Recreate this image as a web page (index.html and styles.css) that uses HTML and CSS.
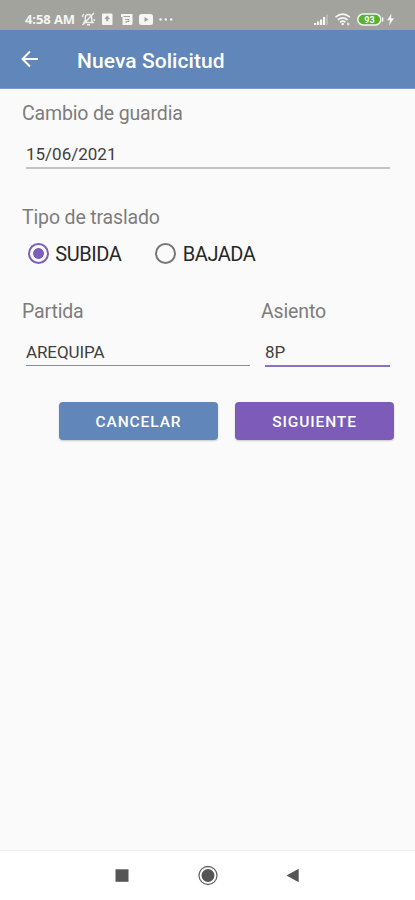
FILE: index.html
```html
<!DOCTYPE html>
<html lang="es">
<head>
<meta charset="utf-8">
<title>Nueva Solicitud</title>
<link rel="stylesheet" href="styles.css">
</head>
<body>
<div class="status">
  <span class="clock">4:58 AM</span>
  <svg class="notices" width="94" height="16" viewBox="0 0 94 16">
    <g fill="none" stroke="#f0f0ee" stroke-width="1.4">
      <path d="M3 11.5h9l-1.3-2V6.5Q10.500 3.500 7.500 3.500Q4.500 3.500 4.300 6.500V9.500ZM6 13.800h3M1.500 14 13 2M1.500 6Q1.500 4 3 3M13.300 8v2"/>
    </g>
    <rect x="21" y="2.500" width="10.500" height="11.500" rx="1" fill="#f5f5f3"/>
    <path d="M26.200 4.500 29 8h-1.800v2.200h-2V8h-1.800Z" fill="#a3a39e"/>
    <path d="M40 3h11.500v9.500q0 1.500-1.500 1.500h-8.500V6H40Z" fill="#f5f5f3"/>
    <path d="M42.500 5.500h6.500M44 8.500h4v2h-3v1.500" fill="none" stroke="#a3a39e"/>
    <rect x="58" y="3" width="14" height="11" rx="2.500" fill="#f5f5f3"/>
    <path d="m63.500 6 4 2.500-4 2.500Z" fill="#a3a39e"/>
    <g fill="#f5f5f3"><circle cx="79.500" cy="8.500" r="1.200"/><circle cx="84.800" cy="8.500" r="1.200"/><circle cx="90.200" cy="8.500" r="1.200"/></g>
  </svg>
  <svg class="signals" width="84" height="16" viewBox="0 0 84 16">
    <g fill="#f5f5f3"><path d="M1 12h2.200v2H1ZM4 10.500h2.200V14H4ZM7 8.500h2.200V14H7ZM10 6h2.200v8H10Z"/><path d="M13.400 3.500h1.300V14h-1.300Z" opacity=".4"/></g>
    <g fill="none" stroke="#f5f5f3" stroke-width="1.700"><path d="M22.500 6.200q7.200-6 14.400 0M24.800 8.800q4.900-4 9.800 0M27 11.200q2.700-2 5.400 0"/></g>
    <circle cx="29.700" cy="13" r="1.300" fill="#f5f5f3"/><path d="M35 11.500v3M34 13h2.500" stroke="#f5f5f3"/>
    <rect x="44.800" y="3" width="23" height="11" rx="5.500" fill="#54b42b" stroke="#f5f5f3" stroke-width="1.500"/>
    <rect x="69" y="6.500" width="1.300" height="4" fill="#f5f5f3"/>
    <text class="charge" x="56.500" y="11.800" text-anchor="middle">93</text>
    <path d="m78.500 2.500-4.300 6.700h2.800l-1 5.300 5-7.300h-3Z" fill="#f5f5f3"/>
  </svg>
</div>
<header class="bar">
  <svg width="18" height="18" viewBox="0 0 18 18" fill="none" stroke="#fff" stroke-width="1.900"><path d="M17 9H2M9 1.500 1.500 9 9 16.500"/></svg>
  <h1><span>Nueva Solicitud</span></h1>
</header>
<main>
  <label class="caption guard"><span>Cambio de guardia</span></label>
  <div class="field date"><span>15/06/2021</span></div>
  <div class="caption kind"><span>Tipo de traslado</span></div>
  <div class="options">
    <div class="option"><i class="radio on"></i><span class="up">SUBIDA</span></div>
    <div class="option"><i class="radio"></i><span class="down">BAJADA</span></div>
  </div>
  <div class="pair">
    <div><div class="caption from"><span>Partida</span></div><div class="field city"><span>AREQUIPA</span></div></div>
    <div><div class="caption seat"><span>Asiento</span></div><div class="field active"><span>8P</span></div></div>
  </div>
  <div class="actions">
    <button class="cancel"><span>CANCELAR</span></button>
    <button class="next"><span>SIGUIENTE</span></button>
  </div>
</main>
<nav>
  <svg width="415" height="50" viewBox="0 0 415 50">
    <rect x="115.500" y="19.300" width="13" height="12.500" fill="#555"/>
    <circle cx="208" cy="25.500" r="9" fill="none" stroke="#666" stroke-width="1.300"/>
    <circle cx="208" cy="25.500" r="6.500" fill="#555"/>
    <path d="M286.500 25.500 298.700 18.700V32.300Z" fill="#555"/>
  </svg>
</nav>
</body>
</html>
```
FILE: styles.css
```css
* { box-sizing: border-box; }
body { margin: 0; width: 415px; height: 900px; display: flex; flex-direction: column; background: #fafafa; font-family: Roboto, sans-serif; overflow: hidden; }
.status { height: 30px; flex: none; background: #a3a39e; display: flex; align-items: center; padding: 8px 18px 0 25px; color: #f5f5f3; }
.clock { width: 51px; font: 700 13px/16px "Open Sans", sans-serif; letter-spacing: -0.1px; white-space: nowrap; }
.notices { margin-left: 5px; }
.signals { margin-left: auto; }
.charge { font: 700 9px Roboto, sans-serif; fill: #fff; }
.bar { height: 59px; flex: none; background: #6086ba; border-bottom: 1px solid #7d9cc5; display: flex; align-items: center; padding-left: 21px; color: #fff; }
h1 { margin: 3px 0 0 38px; font-size: 21px; line-height: 26px; font-weight: 500; letter-spacing: .07px; white-space: nowrap; }
main { flex: 1; padding: 13px 21px 0 22px; }
.caption { display: block; font-size: 19.500px; line-height: 24px; color: #7d7d7d; white-space: nowrap; letter-spacing: -.15px; }
.field { height: 27px; margin: 16px 4px 0; border-bottom: 1px solid #8c8c8c; font-size: 17px; line-height: 24px; color: #404040; }
.date { border-bottom: 2px solid #c3c3c3; margin-right: 4px; }
.kind { margin-top: 37px; }
.options { display: flex; height: 24px; margin: 12px 0 0 5.500px; }
.option { display: flex; align-items: center; width: 127.500px; font-size: 20px; line-height: 24px; letter-spacing: -.45px; color: #282828; }
.radio { width: 21px; height: 21px; border: 2px solid #777; border-radius: 50%; margin: -2px 6.800px 0 0; flex: none; }
.on { border-color: #7b5fba; background: radial-gradient(circle, #7b5fba 5px, transparent 5.700px); }
.pair { display: grid; grid-template-columns: 232px 133px; column-gap: 7px; margin-top: 34px; }
.pair .field { margin-top: 15px; line-height: 26px; letter-spacing: -.1px; }
.pair .active { border-bottom: 2px solid #8870c2; height: 28px; margin-right: 4px; }
.actions { display: flex; justify-content: flex-end; gap: 17px; margin-top: 35px; }
button { width: 159px; height: 38px; border: 0; border-radius: 4px; padding: 2px 0 0; color: #fff; font: 500 15.500px/20px Roboto, sans-serif; letter-spacing: .9px; box-shadow: 0 1px 2px #0003; }
.cancel { background: #6086ba; }
.next { background: #7c5cb8; }
nav { height: 50px; flex: none; background: #fff; border-top: 1px solid #f1f1f1; }
nav svg { display: block; margin-top: -1px; }
```
